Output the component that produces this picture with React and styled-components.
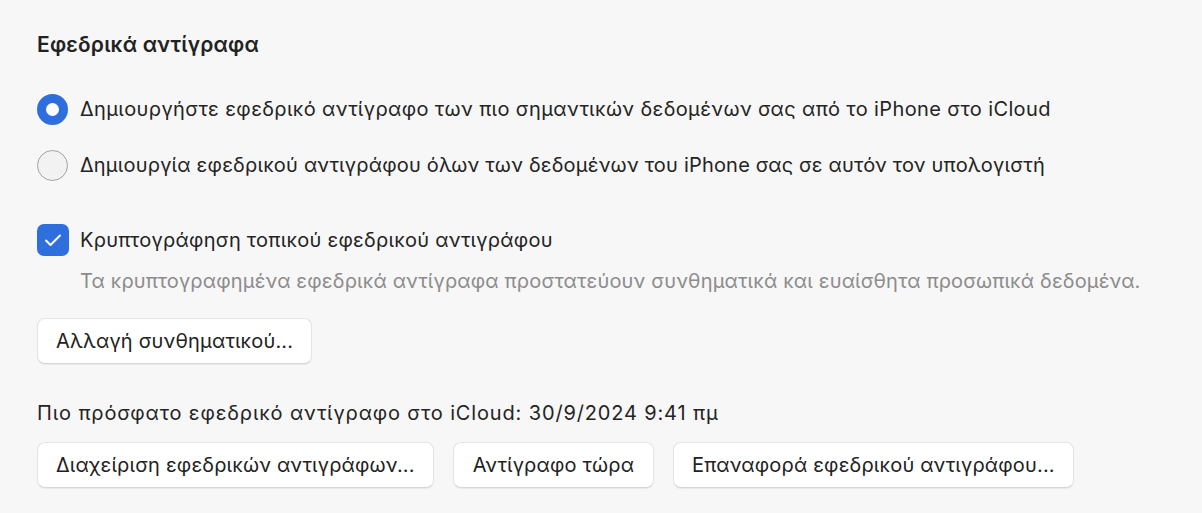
import styled, { createGlobalStyle } from 'styled-components';

const GlobalStyle = createGlobalStyle`
  html, body {
    margin: 0;
    padding: 0;
    background: #f7f7f7;
  }
  body {
    font-family: Inter, "Noto Sans", "DejaVu Sans", sans-serif;
    color: #242424;
    -webkit-font-smoothing: antialiased;
  }
`;

const Panel = styled.div`
  width: 1202px;
  height: 513px;
  box-sizing: border-box;
  padding: 31px 37px 0;
  display: flex;
  flex-direction: column;
  font-size: 20px;
  letter-spacing: 0.25px;
`;

const Title = styled.h2`
  margin: 0;
  font-size: 21px;
  font-weight: 600;
  line-height: 28px;
  letter-spacing: 0.2px;
  color: #222;
`;

const Options = styled.div`
  display: flex;
  flex-direction: column;
  gap: 25px;
  margin-top: 35px;
`;

const OptionRow = styled.label`
  display: flex;
  align-items: center;
  gap: 12px;
  line-height: 31px;
  letter-spacing: ${p => p.$spacing || '0.25px'};
`;

const Radio = styled.span`
  width: 31px;
  height: 31px;
  box-sizing: border-box;
  border-radius: 50%;
  flex-shrink: 0;
  background: ${p => (p.checked ? '#fff' : '#f2f2f2')};
  border: ${p => (p.checked ? '9px solid #2f6fdd' : '1.5px solid #a2a2a2')};
`;

const CheckRow = styled.label`
  display: flex;
  align-items: center;
  gap: 11px;
  margin-top: 43px;
  line-height: 32px;
`;

const Checkbox = styled.span`
  width: 32px;
  height: 32px;
  border-radius: 7px;
  background: #2f6fdd;
  display: flex;
  align-items: center;
  justify-content: center;
  flex-shrink: 0;
`;

const Hint = styled.p`
  margin: 12px 0 0 43px;
  line-height: 26px;
  letter-spacing: 0.17px;
  color: #8c8c8c;
`;

const Button = styled.button`
  height: 46px;
  box-sizing: border-box;
  padding: 0 ${p => p.$pad || '18px'};
  font-family: inherit;
  font-size: 20px;
  letter-spacing: 0.17px;
  color: #222;
  background: #fff;
  border: 1px solid #e4e4e4;
  border-bottom-color: #d6d6d6;
  border-radius: 8px;
  box-shadow: 0 1px 1px rgba(0, 0, 0, 0.06);
`;

const PasswordButton = styled(Button)`
  align-self: flex-start;
  margin-top: 24px;
`;

const Status = styled.p`
  margin: 36px 0 0;
  line-height: 26px;
  letter-spacing: 0.85px;
  color: #242424;
`;

const ButtonRow = styled.div`
  display: flex;
  gap: 19px;
  margin-top: 16px;
`;

const CheckIcon = () => (
  <svg width="20" height="20" viewBox="0 0 20 20" fill="none">
    <path d="M3 10.5l4.5 4.5L17 5.5" stroke="#fff" strokeWidth="2" strokeLinecap="round" strokeLinejoin="round" />
  </svg>
);

export default function App() {
  return (
    <>
      <GlobalStyle />
      <Panel>
        <Title>Εφεδρικά αντίγραφα</Title>
        <Options>
          <OptionRow $spacing="0.38px">
            <Radio checked />
            Δημιουργήστε εφεδρικό αντίγραφο των πιο σημαντικών δεδομένων σας από το iPhone στο iCloud
          </OptionRow>
          <OptionRow $spacing="0.2px">
            <Radio />
            Δημιουργία εφεδρικού αντιγράφου όλων των δεδομένων του iPhone σας σε αυτόν τον υπολογιστή
          </OptionRow>
        </Options>
        <CheckRow>
          <Checkbox>
            <CheckIcon />
          </Checkbox>
          Κρυπτογράφηση τοπικού εφεδρικού αντιγράφου
        </CheckRow>
        <Hint>Τα κρυπτογραφημένα εφεδρικά αντίγραφα προστατεύουν συνθηματικά και ευαίσθητα προσωπικά δεδομένα.</Hint>
        <PasswordButton>Αλλαγή συνθηματικού...</PasswordButton>
        <Status>Πιο πρόσφατο εφεδρικό αντίγραφο στο iCloud: 30/9/2024 9:41 πμ</Status>
        <ButtonRow>
          <Button>Διαχείριση εφεδρικών αντιγράφων...</Button>
          <Button $pad="19px">Αντίγραφο τώρα</Button>
          <Button>Επαναφορά εφεδρικού αντιγράφου...</Button>
        </ButtonRow>
      </Panel>
    </>
  );
}
